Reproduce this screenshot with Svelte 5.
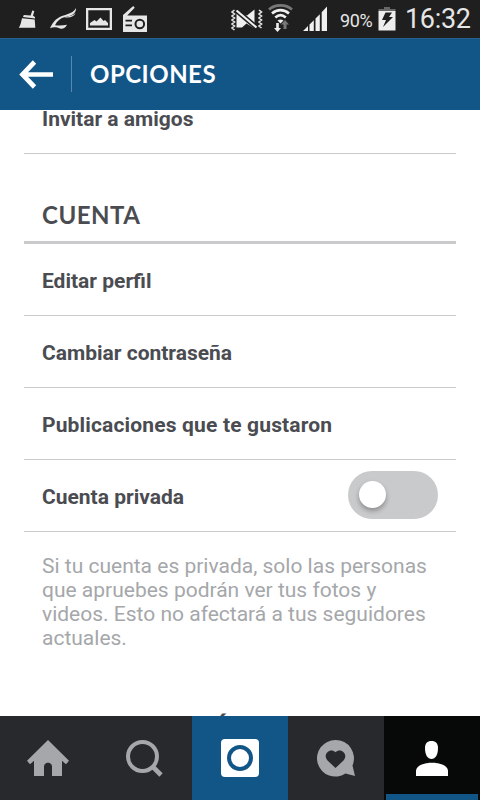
<script>
    let privateAccount = $state(false);
    let active = $state('profile');

    const options = [
        { label: 'Editar perfil' },
        { label: 'Cambiar contraseña' },
        { label: 'Publicaciones que te gustaron', wide: true }
    ];
</script>

<div class="screen">
    <div class="status">
        <svg class="status-icons" width="240" height="38" viewBox="0 0 240 38" fill="#e6e6e6">
            <!-- broom -->
            <path d="M32.3 10.5l2 .6-1.3 4.6 2 1.300v1.500l-12-1.500.8-1.900 6.800.4z" />
            <path d="M22 18.200l12.700 1.200.6 8.300H18.800c2-2.600 2.300-6.500 3.200-9.500z" />
            <!-- bird -->
            <path d="M76 8c.4 4-2.500 7-7.500 8.300l-3.200.7c-5 1-8.300 4-10.300 8.200 3.500.4 8 .4 12-.4-1.500 3.200-4.500 4.500-7 3.700-3-1-6-2-10-.2 3.200-7.300 7.500-11 13.500-12.800C68.500 13.900 74 12.500 76 8z" />
            <path d="M75.500 13c-1.200 3.500-5 5-11 4.300 5-1 8.500-1.500 11-4.300z" />
            <!-- picture -->
            <path fill-rule="evenodd" d="M86 8h26v22H86zM88.300 10.300v17.400h21.400V10.300z" />
            <path d="M90 25.500v-2.500l4.500-3 2 1.500 4-4 3 3.500 1.500-1 3 3v2.500z" />
            <!-- radio -->
            <path d="M123 15l10.200-9 1.500 1.700-7.500 7.800H147V32h-24z" />
            <path d="M125.500 20.700h6.500M125.500 25.300h6.500" stroke="#1f1f1f" stroke-width="1.8" />
            <circle cx="139.8" cy="24" r="4.3" fill="none" stroke="#1f1f1f" stroke-width="2" />
        </svg>
        <svg class="signals" width="100" height="38" viewBox="228 0 100 38" fill="#f0f0f0">
            <!-- vibrate, sound off -->
            <path d="M236.500 13.500h4l6.500 2 7.500-6v19l-8-5-4.500 4h-5.500z" />
            <path d="M236.500 10.500l20 17" stroke="#1f1f1f" stroke-width="5" />
            <path d="M236.500 10.500l20 17" stroke="#f0f0f0" stroke-width="2.2" />
            <path d="M234.500 10l-2.500 2 2.500 2-2.500 2 2.500 2-2.500 2 2.500 2-2.500 2 2.500 2-2.500 2 2.500 2M259 10l2.500 2-2.500 2 2.500 2-2.500 2 2.500 2-2.500 2 2.500 2-2.500 2 2.500 2" fill="none" stroke="#e6e6e6" stroke-width="1.6" />
            <!-- wifi -->
            <g fill="none" stroke-width="2.6">
                <path d="M269 9.500c6-5.500 17-5.500 23 0" stroke="#777" />
                <path d="M272 13.500c5-4.500 12-4.500 17 0M275.300 17.500c3.200-2.800 7.300-2.800 10.500 0" stroke="#f0f0f0" />
            </g>
            <path d="M277.500 20.500q3-2 6 0l-3 3z" />
            <path d="M276.200 23h2.600v5h2.200l-3.500 4-3.500-4h2.200z" />
            <path d="M283.500 29v-4.500H281l4-4.500 4 4.500h-2.500V29z" fill="#777" />
            <!-- mobile signal -->
            <path d="M303 31l5-5v5zM309.500 24.500l4.300-4.300V31h-4.300zM315.500 18.500l4.300-4.300V31h-4.300zM321.700 12.200l5.300-5.700V31h-5.300z" />
        </svg>
        <span class="percent">90%</span>
        <svg class="battery" width="18" height="26" viewBox="0 0 18 26">
            <path d="M6 1h6v2h5.500v2.500H.5V3H6z" fill="#666" />
            <path d="M.5 5h17v19.500H.5z" fill="#eee" />
            <path d="M7.500 6.500h6.500l-3 4.500h4l-10 10 3-7H4z" fill="#1f1f1f" />
        </svg>
        <span class="clock">16:32</span>
    </div>

    <header>
        <button class="back" aria-label="Atrás">
            <svg width="36" height="32" viewBox="18 58 36 32">
                <path d="M34.500 62L22.500 74.500l12 12.500M23 74.500h30" fill="none" stroke="#fff" stroke-width="4.7" />
            </svg>
        </button>
        <h1>OPCIONES</h1>
    </header>

    <main>
        <div class="list">
            <div class="row">Invitar a amigos</div>
            <h2>CUENTA</h2>
            {#each options as option}
                <div class="row" class:wide={option.wide}>{option.label}</div>
            {/each}
            <div class="row">
                <span>Cuenta privada</span>
                <button
                    class="toggle"
                    class:on={privateAccount}
                    role="switch"
                    aria-checked={privateAccount}
                    aria-label="Cuenta privada"
                    onclick={() => (privateAccount = !privateAccount)}
                ></button>
            </div>
            <p>Si tu cuenta es privada, solo las personas<br />que apruebes podrán ver tus fotos y<br />videos. Esto no afectará a tus seguidores<br />actuales.</p>
            <h2>CONFIGURACIÓN</h2>
        </div>
    </main>

    <nav>
        <button class:active={active === 'home'} aria-label="Inicio" onclick={() => (active = 'home')}>
            <svg width="96" height="84" viewBox="0 0 96 84">
                <path d="M48 24l21 20.800-3 3.500-4-3.500V60H52V50.500c0-5-8-5-8 0V60H34V44.800l-4 3.500-3-3.500z" fill="#a5a7aa" />
            </svg>
        </button>
        <button class:active={active === 'search'} aria-label="Buscar" onclick={() => (active = 'search')}>
            <svg width="96" height="84" viewBox="0 0 96 84" fill="none" stroke="#a5a7aa">
                <circle cx="46.5" cy="40.5" r="14.5" stroke-width="4" />
                <path d="M56 50l9 9" stroke-width="4.6" />
            </svg>
        </button>
        <button class="camera" aria-label="Cámara">
            <svg width="96" height="84" viewBox="0 0 96 84">
                <rect x="29" y="23" width="38" height="38" rx="4" fill="#fff" />
                <circle cx="48" cy="42" r="11" fill="none" stroke="#125688" stroke-width="4" />
            </svg>
        </button>
        <button class:active={active === 'activity'} aria-label="Actividad" onclick={() => (active = 'activity')}>
            <svg width="96" height="84" viewBox="0 0 96 84">
                <path d="M47.500 24a18.300 18.300 0 0 1 17 25.500L67 60l-9.500-2.500A18.300 18.300 0 1 1 47.500 24z" fill="#a5a7aa" />
                <path d="M47.500 52l-8-7.500c-5.500-6.500 3-13.500 8-8.200 5-5.300 13.500 1.700 8 8.200z" fill="#27292d" />
            </svg>
        </button>
        <button class:active={active === 'profile'} aria-label="Perfil" onclick={() => (active = 'profile')}>
            <svg width="96" height="84" viewBox="0 0 96 84" fill="#fff">
                <path d="M47.500 25c4.200 0 6.500 2.500 6.500 7 0 7-2.700 11-6.500 11S41 39 41 32c0-4.500 2.300-7 6.500-7z" />
                <path d="M32 60v-5c0-11 32-11 32 0v5z" />
            </svg>
        </button>
    </nav>
</div>

<style>
    :global(body) {
        background: #fff;
    }

    .screen {
        width: 480px;
        height: 800px;
        display: flex;
        flex-direction: column;
        overflow: hidden;
        font-family: Roboto, sans-serif;
    }

    button {
        border: 0;
        padding: 0;
        background: none;
        cursor: pointer;
    }

    svg {
        display: block;
        flex: none;
    }

    .status {
        height: 38px;
        display: flex;
        align-items: center;
        background: #1f1f1f;
        color: #e6e6e6;
    }

    .status-icons {
        margin-right: -12px;
    }

    .percent {
        width: 37px;
        padding: 2px 0 0 12px;
        font-size: 18px;
        letter-spacing: -0.4px;
        white-space: nowrap;
    }

    .battery {
        margin-left: 1px;
    }

    .clock {
        padding-left: 9px;
        font-size: 27px;
        letter-spacing: -0.3px;
        white-space: nowrap;
    }

    header {
        height: 72px;
        display: flex;
        align-items: center;
        background: #125688;
        box-sizing: border-box;
        border-top: 1px solid #2b5f8c;
        padding-bottom: 2px;
        color: #fff;
    }

    .back {
        width: 72px;
        height: 36px;
        padding: 0 0 0 18px;
        box-sizing: border-box;
        border-right: 1px solid #5a89ac;
    }

    h1,
    h2 {
        margin: 0;
        font-family: Lato, sans-serif;
        font-size: 24px;
        font-weight: 700;
        line-height: 34px;
        letter-spacing: 0.5px;
    }

    h1 {
        padding-left: 18px;
    }

    main {
        height: 606px;
        overflow: hidden;
    }

    /* scrolled part of the way down the first row */
    .list {
        margin: -28px 24px 0;
    }

    .row {
        height: 72px;
        box-sizing: border-box;
        padding: 2px 18px 0;
        display: flex;
        align-items: center;
        justify-content: space-between;
        border-bottom: 1px solid #c9cacc;
        color: #4a4c51;
        font-size: 21px;
        font-weight: 700;
    }

    .wide {
        letter-spacing: 0.16px;
    }

    h2 {
        height: 90px;
        box-sizing: border-box;
        padding: 44px 18px 0;
        border-bottom: 3px solid #c9cacc;
        color: #4a4c51;
    }

    .toggle {
        width: 90px;
        height: 48px;
        margin-bottom: 4px;
        padding: 0 11px;
        display: flex;
        align-items: center;
        border-radius: 24px;
        background: #c9cacc;
    }

    .toggle::before {
        content: '';
        width: 27px;
        height: 27px;
        border-radius: 50%;
        background: #fff;
        box-shadow: 0 3px 5px rgba(0, 0, 0, 0.3);
    }

    .toggle.on {
        justify-content: flex-end;
        background: #125688;
    }

    p {
        height: 135px;
        margin: 0;
        padding: 22px 0 0 18px;
        box-sizing: border-box;
        color: #a5a7aa;
        font-size: 21px;
        line-height: 24px;
        white-space: nowrap;
    }

    nav {
        height: 84px;
        display: grid;
        grid-template-columns: repeat(5, 96px);
        background: #27292d;
    }

    nav .camera {
        background: #125688;
    }

    nav .active {
        background: linear-gradient(#125688, #125688) 2px 78px / 92px 6px no-repeat #070908;
    }
</style>
